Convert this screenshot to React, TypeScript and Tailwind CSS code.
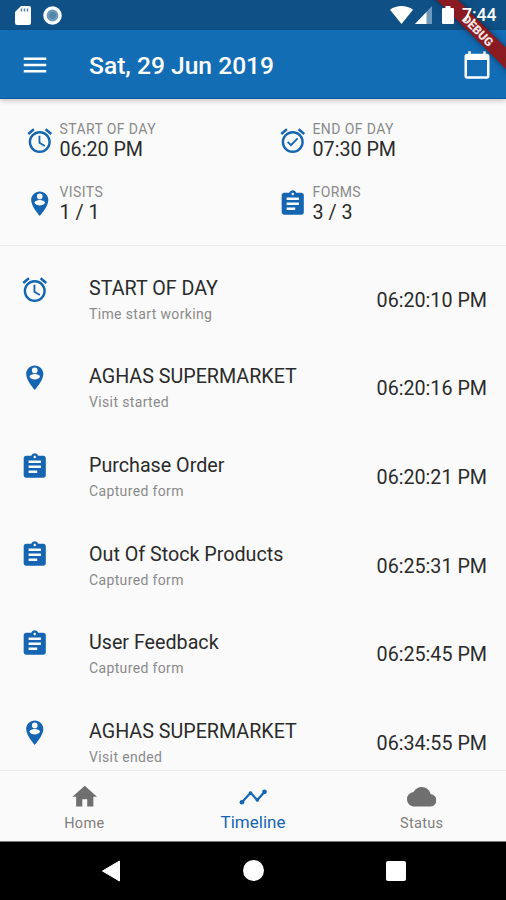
import type { ComponentType } from 'react';
import {
  MdAlarm,
  MdAlarmOn,
  MdAssignment,
  MdCalendarToday,
  MdCloud,
  MdHome,
  MdMenu,
} from 'react-icons/md';

type Icon = ComponentType<{ className?: string }>;

function VisitPin({ className }: { className?: string }) {
  return (
    <svg viewBox="0 0 24 24" className={className}>
      <path
        fill="currentColor"
        fillRule="evenodd"
        d="M12 2C8.140 2 5 5.140 5 9c0 5.250 7 13 7 13s7-7.750 7-13c0-3.860-3.140-7-7-7zm0 1.700a2.300 2.300 0 1 1 0 4.600a2.300 2.300 0 0 1 0-4.600zM12 13.400c-1.900 0-3.500-.8-4.300-2.200.1-1.500 2.700-2.300 4.300-2.300s4.200.8 4.300 2.300c-.8 1.400-2.400 2.200-4.300 2.200z"
      />
    </svg>
  );
}

function TrendLine({ className }: { className?: string }) {
  return (
    <svg viewBox="0 0 24 24" className={className} fill="currentColor">
      <path fill="none" stroke="currentColor" strokeWidth="1.8" d="M3.200 16.500l7-7.700 5.500 5.900L21.600 8" />
      <circle cx="3.200" cy="16.500" r="1.900" />
      <circle cx="10.200" cy="9" r="1.500" />
      <circle cx="15.700" cy="14.500" r="1.500" />
      <circle cx="21.600" cy="8" r="1.900" />
    </svg>
  );
}

const summary = [
  { icon: MdAlarm, label: 'START OF DAY', value: '06:20 PM' },
  { icon: MdAlarmOn, label: 'END OF DAY', value: '07:30 PM' },
  { icon: VisitPin, label: 'VISITS', value: '1 / 1' },
  { icon: MdAssignment, label: 'FORMS', value: '3 / 3' },
];

const events = [
  { icon: MdAlarm, title: 'START OF DAY', detail: 'Time start working', time: '06:20:10 PM' },
  { icon: VisitPin, title: 'AGHAS SUPERMARKET', detail: 'Visit started', time: '06:20:16 PM' },
  { icon: MdAssignment, title: 'Purchase Order', detail: 'Captured form', time: '06:20:21 PM' },
  { icon: MdAssignment, title: 'Out Of Stock Products', detail: 'Captured form', time: '06:25:31 PM' },
  { icon: MdAssignment, title: 'User Feedback', detail: 'Captured form', time: '06:25:45 PM' },
  { icon: VisitPin, title: 'AGHAS SUPERMARKET', detail: 'Visit ended', time: '06:34:55 PM' },
];

function StatusBar() {
  return (
    <div className="h-[30px] shrink-0 bg-[#0f5187] flex items-center justify-between pl-[15px] pr-[9px] text-white">
      <div className="flex items-center gap-3">
        <svg width="16" height="19" viewBox="0 0 16 19">
          <path fill="currentColor" d="M6 0h8a2 2 0 0 1 2 2v15a2 2 0 0 1-2 2H2a2 2 0 0 1-2-2V6z" />
          <path stroke="#5485ab" strokeWidth="1.500" d="M6.500 2.500v3M9.500 2.500v3M12.500 2.500v3" />
        </svg>
        <svg width="19" height="19" viewBox="0 0 19 19">
          <circle cx="9.500" cy="9.500" r="7.600" fill="#6f9abb" stroke="currentColor" strokeWidth="3.400" />
          <circle cx="9.500" cy="9.500" r="3.400" fill="#5485ab" />
        </svg>
      </div>
      {/* system icons stay above the debug ribbon */}
      <div className="relative z-30 flex items-center">
        <svg width="23" height="18" viewBox="0 0 23 18">
          <path fill="currentColor" d="M0 3.800C6.500-1.200 16.500-1.200 23 3.800L11.500 18z" />
        </svg>
        <svg className="ml-[2px]" width="17" height="18" viewBox="0 0 17 18">
          <path fill="#6f9abb" d="M17 0v18H0z" />
          <path fill="currentColor" d="M11.500 6v12H0z" />
        </svg>
        <svg className="ml-[10px]" width="12" height="18" viewBox="0 0 12 18">
          <path fill="currentColor" d="M3.500 0h5v2H11a1 1 0 0 1 1 1v14a1 1 0 0 1-1 1H1a1 1 0 0 1-1-1V3a1 1 0 0 1 1-1h2.500z" />
        </svg>
        <span className="ml-[8px] mt-[2px] w-[35px] text-[17.500px] leading-none font-medium whitespace-nowrap">7:44</span>
      </div>
    </div>
  );
}

function DebugBanner() {
  return (
    <div className="absolute z-20 top-0 right-0 w-[80px] h-[80px] overflow-hidden pointer-events-none">
      <div className="absolute left-[-18.500px] top-[22.500px] w-[140px] h-[15px] rotate-45 bg-[#8b1a20] shadow-[0_0_6px_rgba(0,0,0,0.5)] flex items-center justify-center text-[#f3e4e4] text-[12px] leading-none font-black">
        DEBUG
      </div>
    </div>
  );
}

function AppBar() {
  return (
    <header className="relative z-10 h-[69px] shrink-0 bg-[#136db5] flex items-center pl-5 pr-[14px] text-white border-b border-[#0d5b9c] shadow-[0_2px_5px_rgba(0,0,0,0.2)]">
      <MdMenu className="w-[30px] h-[30px] mt-[2px]" />
      <h1 className="ml-[39px] mt-[4px] flex-1 text-[24.600px] leading-none font-medium">Sat, 29 Jun 2019</h1>
      <MdCalendarToday className="w-[30px] h-[30px] mt-[2px]" />
    </header>
  );
}

function SummaryItem({ icon: ItemIcon, label, value }: { icon: Icon; label: string; value: string }) {
  return (
    <div className="flex items-center h-[63px] pl-[25px]">
      <ItemIcon className="w-[29.500px] h-[29.500px] text-[#1565b3]" />
      <div className="ml-[5px] -mt-px">
        <div className="text-[14px] leading-[18px] text-[#8a8a8a] tracking-[0.400px]">{label}</div>
        <div className="mt-px text-[19.700px] leading-[22px] text-[#2b2b2b]">{value}</div>
      </div>
    </div>
  );
}

function EventRow({ icon: RowIcon, title, detail, time }: (typeof events)[number]) {
  return (
    <li className="h-[88.600px] flex items-center pl-5 pr-[19px]">
      <RowIcon className="w-[29.500px] h-[29.500px] mb-5 text-[#1565b3]" />
      <div className="ml-[39.500px] mt-[2px] flex-1">
        <div className="text-[19.700px] leading-6 text-[#2b2b2b]">{title}</div>
        <div className="mt-[3px] text-[14px] leading-5 text-[#8a8a8a] tracking-[0.360px]">{detail}</div>
      </div>
      <div className="mt-[3px] text-[19.700px] leading-6 text-[#2b2b2b]">{time}</div>
    </li>
  );
}

function BottomNav() {
  return (
    <nav className="h-[72px] shrink-0 bg-[#fafafa] border-t border-[#eeeeee] border-b border-b-[#777777] grid grid-cols-3 text-[#6f6f6f]">
      <div className="flex flex-col items-center pt-[11px]">
        <MdHome className="w-[29.500px] h-[29.500px]" />
        <span className="mt-[2px] text-[14.500px] leading-5 tracking-[0.300px] text-[#808080]">Home</span>
      </div>
      <div className="flex flex-col items-center pt-[11px] text-[#1565b3]">
        <TrendLine className="w-[29.500px] h-[29.500px]" />
        <span className="text-[17px] leading-5">Timeline</span>
      </div>
      <div className="flex flex-col items-center pt-[11px]">
        <MdCloud className="w-[29.500px] h-[29.500px]" />
        <span className="mt-[2px] text-[14.500px] leading-5 tracking-[0.300px] text-[#808080]">Status</span>
      </div>
    </nav>
  );
}

function SystemNav() {
  return (
    <div className="h-[58px] shrink-0 bg-black flex justify-center gap-[122px] pt-[18px] pl-[1px] text-white">
      <svg width="20" height="22" viewBox="0 0 20 22">
        <path fill="currentColor" stroke="currentColor" strokeLinejoin="round" d="M18.500 1v20L1.500 11z" />
      </svg>
      <div className="w-[21px] h-[21px] rounded-full bg-white" />
      <div className="mt-[1px] w-[20px] h-[20px] rounded-[2px] bg-white" />
    </div>
  );
}

export default function App() {
  return (
    <div className="relative w-[506px] h-[900px] overflow-hidden flex flex-col bg-[#fafafa] font-[Roboto,sans-serif]">
      <StatusBar />
      <AppBar />
      <section className="h-[147px] shrink-0 pt-[10px] grid grid-cols-2 content-start border-b border-[#eeeeee]">
        {summary.map((item) => (
          <SummaryItem key={item.label} {...item} />
        ))}
      </section>
      <ul className="flex-1 min-h-0 overflow-hidden pt-[9px]">
        {events.map((event) => (
          <EventRow key={event.time} {...event} />
        ))}
      </ul>
      <BottomNav />
      <SystemNav />
      <DebugBanner />
    </div>
  );
}
